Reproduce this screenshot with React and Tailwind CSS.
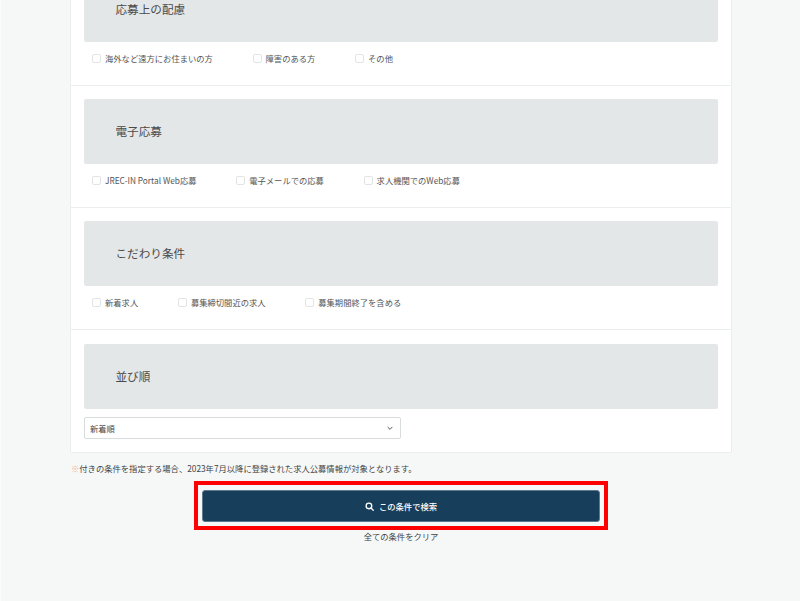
import React from "react";

const sections = [
  { title: "応募上の配慮", options: ["海外など遠方にお住まいの方", "障害のある方", "その他"] },
  { title: "電子応募", options: ["JREC-IN Portal Web応募", "電子メールでの応募", "求人機関でのWeb応募"] },
  { title: "こだわり条件", options: ["新着求人", "募集締切間近の求人", "募集期間終了を含める"] },
];

const SectionTitle = ({ children }) => (
  <div className="h-[65px] flex items-center pl-[31.5px] bg-[#e4e7e8] rounded-[2px] text-[11.6px] text-[#4a4a4a]">
    {children}
  </div>
);

const Option = ({ label }) => (
  <label className="flex items-center gap-1 text-[8.3px] text-[#555]">
    <span className="w-[9px] h-[9px] bg-white border border-[#e2e4e5] rounded-[2px]" />
    {label}
  </label>
);

const App = () => {
  return (
    <div className="h-[601px] overflow-hidden bg-[#f6f8f8] border-l border-[#fbfcfc] font-['Noto_Sans_CJK_JP','Noto_Sans',sans-serif]">
      <div className="w-[662px] ml-[69px] -mt-[37px] bg-white border border-t-0 border-[#eceeee] rounded-b-[2px]">
        {sections.map((s) => (
          <section key={s.title} className="border-t border-[#eceeee] px-[13px] pt-[13px] h-[122px]">
            <SectionTitle>{s.title}</SectionTitle>
            <div className="flex gap-[39.7px] pl-2 pt-[10px]">
              {s.options.map((o) => (
                <Option key={o} label={o} />
              ))}
            </div>
          </section>
        ))}
        <section className="border-t border-[#eceeee] px-[13px] pt-[14px] pb-[13px]">
          <SectionTitle>並び順</SectionTitle>
          <div className="mt-[8px] w-[317px] h-[22px] flex items-center justify-between px-[5px] bg-white border border-[#d9dcdd] rounded-[2px] text-[8.3px] text-[#444]">
            新着順
            <svg width="8" height="8" viewBox="0 0 24 24" fill="none" stroke="#555" strokeWidth="3" className="mr-[1px]">
              <path d="M5 9l7 7 7-7" />
            </svg>
          </div>
        </section>
      </div>
      <p className="ml-[70px] mt-[9px] text-[8.3px] leading-[12px] text-[#444]">
        <span className="text-[#f3b49b]">※</span>付きの条件を指定する場合、2023年7月以降に登録された求人公募情報が対象となります。
      </p>
      <div className="w-[414px] h-[49px] ml-[193px] mt-[7px] pl-[4px] pr-[4px] pt-[5px] pb-[4px] border-4 border-[#fe0000]">
        <button className="w-full h-full flex items-center justify-center gap-[5px] bg-[#173e5b] border border-[#5d7a90] rounded-[3px] text-[8.3px] font-medium text-white">
          <svg width="9" height="9" viewBox="0 0 24 24" fill="none" stroke="#fff" strokeWidth="3.5" strokeLinecap="round">
            <circle cx="10.5" cy="10.5" r="7.5" />
            <path d="M16 16l6 6" />
          </svg>
          この条件で検索
        </button>
      </div>
      <p className="w-[414px] ml-[193px] text-center text-[8.3px] leading-[12px] text-[#444]">全ての条件をクリア</p>
    </div>
  );
};

export default App;
